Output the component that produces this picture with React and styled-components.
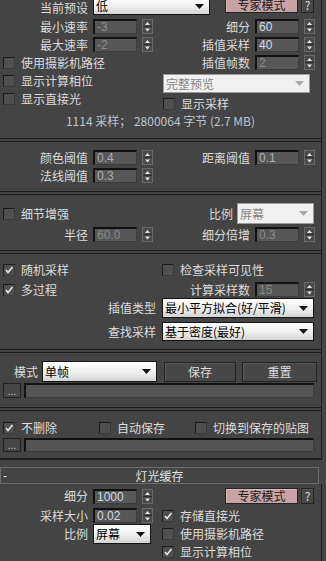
import React from "react";
import styled, { createGlobalStyle } from "styled-components";

const GlobalStyle = createGlobalStyle`
  html, body {
    margin: 0;
    padding: 0;
    background: #444444;
  }
`;

const tones = { on: "#d2dbea", dim: "#a9b0bc", off: "#8a8a8a" };

export default function App() {
  return (
    <Page>
      <GlobalStyle />
      <Panel $top>
        <Row $h={18}>
          <Label $w={85} $bottom>当前预设</Label>
          <Select $w={117} $h={18} value="低" />
          <Button $expert $w={73} $h={16} $ml={15} $top>专家模式</Button>
          <Button $w={13} $h={16} $ml={3} $top>?</Button>
        </Row>
        <Row $mt={4}>
          <Half>
            <Label $w={85}>最小速率</Label>
            <NumField value="-3" tone="off" />
          </Half>
          <RightHalf>
            <Label $w={90}>细分</Label>
            <NumField value="60" tone="on" />
          </RightHalf>
        </Row>
        <Row $mt={3}>
          <Half>
            <Label $w={85}>最大速率</Label>
            <NumField value="-2" tone="off" />
          </Half>
          <RightHalf>
            <Label $w={90}>插值采样</Label>
            <NumField value="40" tone="on" />
          </RightHalf>
        </Row>
        <Split>
          <Column $w={157} $pt={1}>
            <CheckItem label="使用摄影机路径" />
            <CheckItem label="显示计算相位" />
            <CheckItem label="显示直接光" />
          </Column>
          <Column>
            <InlineRow>
              <Label $w={90}>插值帧数</Label>
              <NumField value="2" tone="off" />
            </InlineRow>
            <Select $w={147} $h={19} $ml={3} $off value="完整预览" />
            <CheckItem label="显示采样" ml={3} />
          </Column>
        </Split>
        <Info>1114 采样； 2800064 字节 (2.7 MB)</Info>

        <Divider $mt={10} />
        <Row $mt={8}>
          <Half>
            <Label $w={85}>颜色阈值</Label>
            <NumField value="0.4" tone="dim" />
          </Half>
          <RightHalf>
            <Label $w={90}>距离阈值</Label>
            <NumField value="0.1" tone="dim" />
          </RightHalf>
        </Row>
        <Row $mt={3}>
          <Half>
            <Label $w={85}>法线阈值</Label>
            <NumField value="0.3" tone="dim" />
          </Half>
        </Row>

        <Divider $mt={8} />
        <Row $mt={8} $h={21}>
          <Half>
            <CheckItem label="细节增强" />
          </Half>
          <RightHalf>
            <Label $w={73} $gap={4}>比例</Label>
            <Select $w={77} $h={21} $off value="屏幕" />
          </RightHalf>
        </Row>
        <Row $mt={3}>
          <Half>
            <Label $w={85}>半径</Label>
            <NumField value="60.0" tone="off" />
          </Half>
          <RightHalf>
            <Label $w={90}>细分倍增</Label>
            <NumField value="0.3" tone="off" />
          </RightHalf>
        </Row>

        <Divider $mt={8} />
        <Row $mt={9} $h={14}>
          <Half>
            <CheckItem label="随机采样" checked />
          </Half>
          <RightHalf>
            <CheckItem label="检查采样可见性" ml={2} />
          </RightHalf>
        </Row>
        <Row $mt={5}>
          <Half>
            <CheckItem label="多过程" checked />
          </Half>
          <RightHalf>
            <Label $w={90}>计算采样数</Label>
            <NumField value="15" tone="off" />
          </RightHalf>
        </Row>
        <Row $mt={1} $h={20}>
          <Label $w={153} $gap={6}>插值类型</Label>
          <Select $w={152} $h={20} value="最小平方拟合(好/平滑)" />
        </Row>
        <Row $mt={4} $h={19}>
          <Label $w={153} $gap={6}>查找采样</Label>
          <Select $w={152} $h={19} value="基于密度(最好)" />
        </Row>

        <Divider $mt={8} />
        <Row $mt={8} $h={21}>
          <Label $w={35} $gap={4}>模式</Label>
          <Select $w={115} $h={21} value="单帧" />
          <Button $w={72} $h={20} $ml={7}>保存</Button>
          <Button $w={75} $h={20} $ml={6}>重置</Button>
        </Row>
        <Row $mt={1}>
          <DotsButton>...</DotsButton>
          <PathField />
        </Row>

        <Divider $mt={9} />
        <Row $mt={10} $h={14}>
          <CheckItem label="不删除" checked w={96} />
          <CheckItem label="自动保存" w={96} />
          <CheckItem label="切换到保存的贴图" />
        </Row>
        <Row $mt={3} $h={14}>
          <DotsButton>...</DotsButton>
          <PathField />
        </Row>
      </Panel>

      <RolloutHeader>
        <Collapse>-</Collapse>
        <Title>灯光缓存</Title>
        <span />
      </RolloutHeader>

      <Panel $fill>
        <Row $mt={4} $h={16}>
          <Half>
            <Label $w={85}>细分</Label>
            <NumField value="1000" tone="on" />
          </Half>
          <RightHalf>
            <Button $expert $w={73} $h={16} $ml={65}>专家模式</Button>
            <Button $w={13} $h={16} $ml={3}>?</Button>
          </RightHalf>
        </Row>
        <Row $mt={4}>
          <Half>
            <Label $w={85}>采样大小</Label>
            <NumField value="0.02" tone="on" />
          </Half>
          <RightHalf>
            <CheckItem label="存储直接光" checked ml={2} />
          </RightHalf>
        </Row>
        <Row $mt={1} $h={20}>
          <Half>
            <Label $w={85}>比例</Label>
            <Select $w={58} $h={20} value="屏幕" />
          </Half>
          <RightHalf>
            <CheckItem label="使用摄影机路径" ml={2} />
          </RightHalf>
        </Row>
        <Row $mt={1} $h={14}>
          <Half />
          <RightHalf>
            <CheckItem label="显示计算相位" checked ml={2} />
          </RightHalf>
        </Row>
      </Panel>
    </Page>
  );
}

function NumField({ value, tone }) {
  return (
    <>
      <NumBox $color={tones[tone]}>{value}</NumBox>
      <Spinner width="11" height="15" viewBox="0 0 11 15">
        <rect x="0.5" y="0.5" width="10" height="14" fill="#4a4a4a" stroke="#6a6a6a" />
        <line x1="1" y1="7.5" x2="10" y2="7.5" stroke="#2c2c2c" />
        <path d="M3 6 L5.5 3 L8 6 Z" fill="#e6e6e6" />
        <path d="M3 9.5 L8 9.5 L5.5 12.5 Z" fill="#e6e6e6" />
      </Spinner>
    </>
  );
}

function Select({ value, $w, $h, $ml, $off }) {
  return (
    <SelectBox $w={$w} $h={$h} $ml={$ml} $off={$off}>
      <span>{value}</span>
      <svg width="9" height="5" viewBox="0 0 9 5">
        <path d="M0 0 L9 0 L4.5 5 Z" fill={$off ? "#a8a8a8" : "#111"} />
      </svg>
    </SelectBox>
  );
}

function CheckItem({ label, checked, ml, w }) {
  return (
    <CheckLabel $ml={ml} $w={w}>
      <Box>
        {checked && (
          <svg width="10" height="10" viewBox="0 0 10 10">
            <path d="M2 5 L4 7.5 L8.5 2" fill="none" stroke="#e8e8e8" strokeWidth="1.6" />
          </svg>
        )}
      </Box>
      {label}
    </CheckLabel>
  );
}

const Page = styled.div`
  width: 326px;
  height: 561px;
  overflow: hidden;
  background: #444444;
  color: #dcdcdc;
  font-family: "Noto Sans CJK SC", "Noto Sans", sans-serif;
  font-size: 12px;
  line-height: 14px;
  display: flex;
  flex-direction: column;
`;

const Panel = styled.div`
  width: 322px;
  box-sizing: border-box;
  border-right: 1px solid #1c1c1c;
  display: flex;
  flex-direction: column;
  ${(p) => p.$top && "margin-top: -3px; padding-bottom: 6px; border-bottom: 2px solid #1c1c1c;"}
  ${(p) => p.$fill && "flex: 1;"}
`;

const Row = styled.div`
  display: flex;
  align-items: center;
  height: ${(p) => p.$h || 15}px;
  margin-top: ${(p) => p.$mt || 0}px;
  padding-left: 3px;
  flex-shrink: 0;
`;

const Half = styled.div`
  display: flex;
  align-items: center;
  width: 157px;
  flex-shrink: 0;
`;

const RightHalf = styled.div`
  display: flex;
  align-items: center;
  flex: 1;
  min-width: 0;
`;

const Split = styled.div`
  display: flex;
  margin-top: 3px;
  padding-left: 3px;
`;

const Column = styled.div`
  display: flex;
  flex-direction: column;
  gap: 4px;
  padding-top: ${(p) => p.$pt || 0}px;
  ${(p) => p.$w && `width: ${p.$w}px; flex-shrink: 0;`}
`;

const InlineRow = styled.div`
  display: flex;
  align-items: center;
  height: 15px;
`;

const Label = styled.span`
  width: ${(p) => p.$w}px;
  margin-right: ${(p) => p.$gap ?? 5}px;
  text-align: right;
  white-space: nowrap;
  flex-shrink: 0;
  ${(p) => p.$bottom && "align-self: flex-end;"}
`;

const NumBox = styled.div`
  width: 44px;
  height: 15px;
  box-sizing: border-box;
  background: #575757;
  border-style: solid;
  border-width: 2px 1px 1px 2px;
  border-color: #121212 #3c3c3c #3c3c3c #121212;
  padding-left: 2px;
  font-family: "Liberation Sans", "Noto Sans", sans-serif;
  font-size: 12px;
  line-height: 12px;
  color: ${(p) => p.$color};
  flex-shrink: 0;
`;

const Spinner = styled.svg`
  margin-left: 5px;
  flex-shrink: 0;
  display: block;
`;

const SelectBox = styled.div`
  width: ${(p) => p.$w}px;
  height: ${(p) => p.$h}px;
  margin-left: ${(p) => p.$ml || 0}px;
  box-sizing: border-box;
  display: flex;
  align-items: center;
  justify-content: space-between;
  padding: 0 5px 0 2px;
  border: 1px solid ${(p) => (p.$off ? "#9c9c9c" : "#141414")};
  background: ${(p) => (p.$off ? "#f1f1f1" : "linear-gradient(#ffffff, #efefef 55%, #d4d4d4)")};
  color: ${(p) => (p.$off ? "#858585" : "#000000")};
  white-space: nowrap;
  flex-shrink: 0;
  svg {
    flex-shrink: 0;
  }
`;

const Button = styled.div`
  box-sizing: border-box;
  display: flex;
  align-items: center;
  justify-content: center;
  width: ${(p) => p.$w}px;
  height: ${(p) => p.$h}px;
  margin-left: ${(p) => p.$ml || 0}px;
  ${(p) => p.$top && "align-self: flex-start;"}
  background: ${(p) => (p.$expert ? "#c9a3a3" : "#474747")};
  color: ${(p) => (p.$expert ? "#1c1c1c" : "#dcdcdc")};
  border: 1px solid #232323;
  box-shadow: inset 1px 1px 0 ${(p) => (p.$expert ? "#d8bcbc" : "#575757")};
  flex-shrink: 0;
  white-space: nowrap;
`;

const CheckLabel = styled.div`
  display: flex;
  align-items: center;
  gap: 6px;
  height: 14px;
  white-space: nowrap;
  margin-left: ${(p) => p.$ml || 0}px;
  ${(p) => p.$w && `width: ${p.$w}px; flex-shrink: 0;`}
`;

const Box = styled.span`
  width: 12px;
  height: 12px;
  box-sizing: border-box;
  border-style: solid;
  border-width: 1px;
  border-color: #1c1c1c #3a3a3a #3a3a3a #1c1c1c;
  background: #4f4f4f;
  display: flex;
  align-items: center;
  justify-content: center;
  flex-shrink: 0;
`;

const Info = styled.div`
  margin-top: 3px;
  height: 14px;
  text-align: center;
  color: #bcc4d2;
`;

const Divider = styled.div`
  margin-top: ${(p) => p.$mt}px;
  height: 4px;
  box-sizing: border-box;
  border-top: 1px solid #1c1c1c;
  border-bottom: 1px solid #1c1c1c;
  flex-shrink: 0;
`;

const DotsButton = styled.div`
  width: 18px;
  height: 100%;
  box-sizing: border-box;
  border: 1px solid #222222;
  background: #474747;
  color: #c8c8c8;
  font-family: "Liberation Sans", sans-serif;
  font-size: 10px;
  line-height: 10px;
  display: flex;
  align-items: flex-end;
  justify-content: center;
  flex-shrink: 0;
`;

const PathField = styled.div`
  width: 290px;
  height: 100%;
  margin-left: 3px;
  box-sizing: border-box;
  background: #545454;
  border-style: solid;
  border-width: 2px 1px 1px 2px;
  border-color: #121212 #3c3c3c #3c3c3c #121212;
`;

const RolloutHeader = styled.div`
  margin-top: 7px;
  width: 319px;
  height: 17px;
  box-sizing: border-box;
  border: 1px solid #6c6c6c;
  display: grid;
  grid-template-columns: 14px 1fr 14px;
  align-items: center;
  flex-shrink: 0;
`;

const Collapse = styled.span`
  padding-left: 2px;
  color: #e6e6e6;
  font-family: "Liberation Sans", sans-serif;
`;

const Title = styled.span`
  text-align: center;
  color: #e2e2e2;
`;
